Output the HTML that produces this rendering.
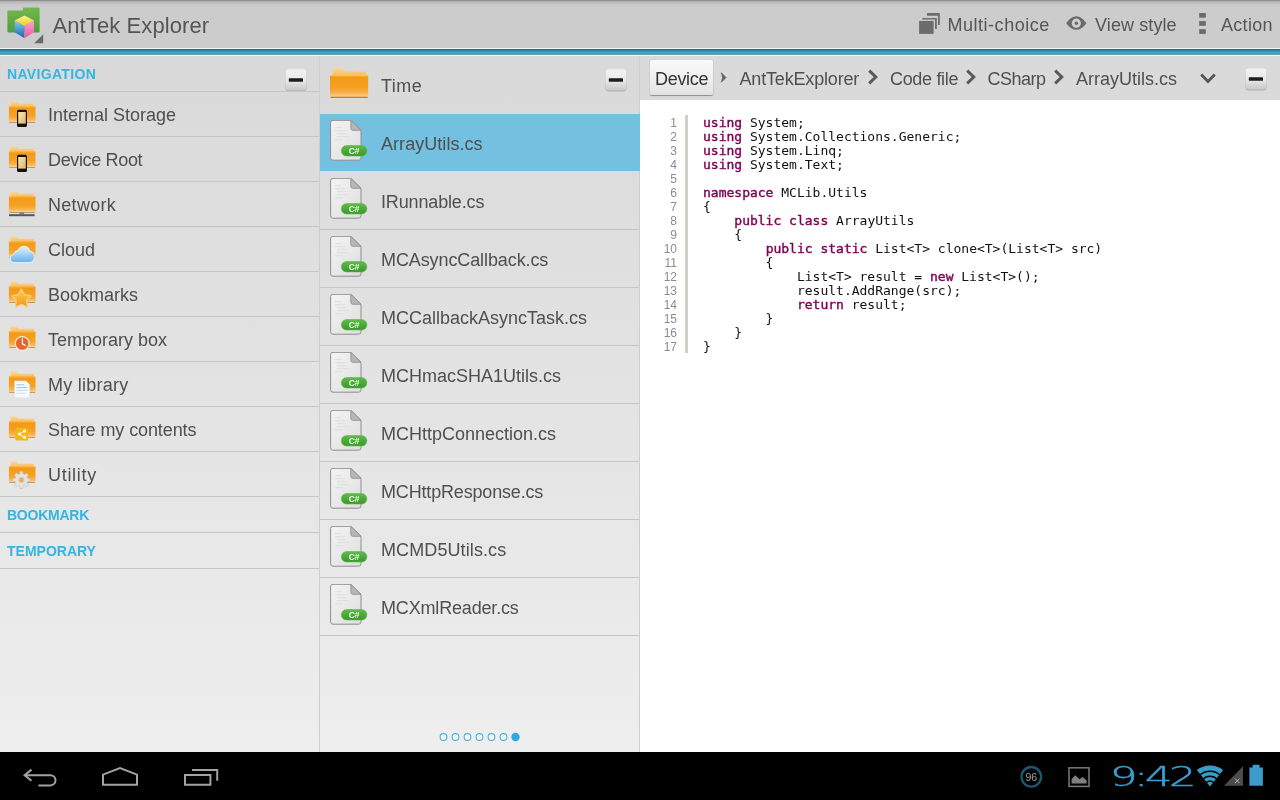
<!DOCTYPE html>
<html lang="en">
<head>
<meta charset="utf-8">
<title>AntTek Explorer</title>
<style>
html,body{margin:0;padding:0;}
body{width:1280px;height:800px;overflow:hidden;position:relative;background:#e6e6e6;font-family:"Liberation Sans",sans-serif;color:#4d4d4d;}
#bg{position:absolute;left:0;top:0;width:1280px;height:752px;background:linear-gradient(to bottom,#d9d9d9 56px,#eeeeee 752px);}
#app{position:absolute;left:0;top:0;width:1280px;height:752px;will-change:transform;}
#actionbar{position:absolute;left:0;top:0;width:1280px;height:48px;background:linear-gradient(to bottom,#8e8e8e 0,#8e8e8e 1px,#b2b2b2 1px,#b2b2b2 2px,#bebebe 2px,#c1c1c1 4px,#c8c8c8 4px,#c9c9c9 7px,#cccccc 7px,#cccccc 100%);}
#stripe{position:absolute;left:0;top:48px;width:1280px;height:8px;background:linear-gradient(to bottom,#eaf8fb 0px,#eaf8fb 1px,#35697f 1px,#35697f 2px,#37819f 2px,#37819f 3px,#3b93b5 3px,#3b93b5 4px,#44a0c3 4px,#44a0c3 5px,#4d9fc0 5px,#4d9fc0 6px,#5e9db7 6px,#5e9db7 7px,#eef9fc 7px,#eef9fc 8px);}
#title{position:absolute;left:52.5px;top:13px;font-size:22px;line-height:26px;color:#555;letter-spacing:0.1px;white-space:nowrap;}
.act{position:absolute;top:14px;font-size:18px;line-height:22px;color:#555;white-space:nowrap;}
.panel{position:absolute;top:56px;height:696px;}
#left{left:0;width:319px;}
#mid{left:320px;width:319px;}
#right{left:640px;width:640px;}
.vdiv{position:absolute;top:56px;width:1px;height:696px;background:#cecece;}
.sect{position:absolute;left:7px;font-size:14px;font-weight:bold;color:#33b5e5;line-height:16px;white-space:nowrap;}
.hdiv{position:absolute;left:0;width:319px;height:1px;background:#c6c6c6;}
.nav{position:absolute;left:48px;font-size:18px;line-height:22px;white-space:nowrap;color:#4f4f4f;}
.file{position:absolute;left:61px;font-size:18px;line-height:22px;white-space:nowrap;color:#4f4f4f;}
.badge{position:absolute;left:21.3px;width:25.6px;height:10.5px;line-height:10.8px;text-align:center;font-size:8.5px;font-weight:bold;color:#e6ffe2;letter-spacing:-0.1px;}
#sel{position:absolute;left:0;top:58px;width:320px;height:57px;background:#74c0e0;}
#crumbbar{position:absolute;left:0;top:0;width:640px;height:44px;background:#dadada;}
#devbtn{position:absolute;left:10px;top:4px;width:63px;height:35px;border-radius:2px;background:linear-gradient(to bottom,#fafafa,#ededed 60%,#e2e2e2);box-shadow:0 1px 1px rgba(0,0,0,0.35),0 0 1px rgba(0,0,0,0.25);}
#code{position:absolute;left:0;top:44px;width:640px;height:652px;background:#fff;}
.crumb{position:absolute;top:12px;font-size:18px;line-height:22px;white-space:nowrap;color:#4f4f4f;}
#navbg{position:absolute;left:0;top:752px;width:1280px;height:48px;background:#000;}
#navbar{position:absolute;left:0;top:752px;width:1280px;height:48px;will-change:transform;}
svg.ic{position:absolute;overflow:visible;}
pre{margin:0;}
#ln{position:absolute;left:0;top:16px;width:37px;text-align:right;font-family:"Liberation Sans",sans-serif;font-size:12px;line-height:14px;color:#8c8c8c;}
#gut{position:absolute;left:45px;top:15px;width:3px;height:238px;background:#d2cfc9;}
#src{position:absolute;left:63px;top:16px;font-family:"DejaVu Sans Mono","Liberation Mono",monospace;font-size:13px;line-height:14px;color:#111;}
#src b{color:#7f0055;font-weight:normal;-webkit-text-stroke:0.4px #7f0055;}
</style>
</head>
<body>
<svg width="0" height="0" style="position:absolute">
<defs>
<linearGradient id="gFold" x1="0" y1="0" x2="0" y2="1"><stop offset="0" stop-color="#f4a326"/><stop offset="0.12" stop-color="#f29b16"/><stop offset="0.6" stop-color="#f5a126"/><stop offset="0.82" stop-color="#f8b452"/><stop offset="0.96" stop-color="#fccd8a"/><stop offset="1" stop-color="#f3b762"/></linearGradient>
<linearGradient id="gFoldB" x1="0" y1="0" x2="0" y2="1"><stop offset="0" stop-color="#fcd692"/><stop offset="1" stop-color="#f7b44c"/></linearGradient>
<linearGradient id="gBtn" x1="0" y1="0" x2="0" y2="1"><stop offset="0" stop-color="#f3f3f3"/><stop offset="0.55" stop-color="#e8e8e8"/><stop offset="1" stop-color="#c9c9c9"/></linearGradient>
<linearGradient id="gPage" x1="0" y1="0" x2="1" y2="1"><stop offset="0" stop-color="#f4f4f4"/><stop offset="1" stop-color="#dedede"/></linearGradient>
<linearGradient id="gBadge" x1="0" y1="0" x2="0" y2="1"><stop offset="0" stop-color="#5fbb4a"/><stop offset="1" stop-color="#3c972d"/></linearGradient>
<linearGradient id="gScreen" x1="0" y1="0" x2="1" y2="1"><stop offset="0" stop-color="#f7e6bd"/><stop offset="1" stop-color="#e3b666"/></linearGradient>
<linearGradient id="gCloud" x1="0" y1="0" x2="0" y2="1"><stop offset="0" stop-color="#e6f5ff"/><stop offset="1" stop-color="#62b0ea"/></linearGradient>
<linearGradient id="gStar" x1="0" y1="0" x2="0" y2="1"><stop offset="0" stop-color="#fdd05c"/><stop offset="1" stop-color="#f39418"/></linearGradient>
<linearGradient id="gGreen" x1="0" y1="0" x2="0" y2="1"><stop offset="0" stop-color="#74b84c"/><stop offset="1" stop-color="#4f9c3c"/></linearGradient>
<linearGradient id="gCt" x1="0" y1="0" x2="0" y2="1"><stop offset="0" stop-color="#fff68a"/><stop offset="1" stop-color="#fcc22e"/></linearGradient>
<linearGradient id="gCl" x1="0" y1="0" x2="0" y2="1"><stop offset="0" stop-color="#7fd0f4"/><stop offset="1" stop-color="#1b62a8"/></linearGradient>
<linearGradient id="gCr" x1="0" y1="0" x2="0" y2="1"><stop offset="0" stop-color="#f7a6d6"/><stop offset="1" stop-color="#f0559a"/></linearGradient>
<symbol id="fold" viewBox="0 0 38.4 30" preserveAspectRatio="none">
  <path d="M2.6 1.7 Q2.6 0.1 4.2 0.1 H9.6 Q10.7 0.1 11.5 0.8 L14.6 3.5 H34.6 Q36 3.5 36 4.9 V11 H2.6 Z" fill="url(#gFoldB)"/>
  <rect x="0" y="6.9" width="38.4" height="22.3" rx="1.5" fill="url(#gFold)"/>
  <rect x="0.4" y="7.1" width="37.6" height="1.1" rx="0.5" fill="#fbc56c" opacity="0.8"/>
  <rect x="0.5" y="28.7" width="37.4" height="1.2" rx="0.6" fill="#a66f28" opacity="0.8"/>
</symbol>
<symbol id="minus" viewBox="0 0 24 24">
  <rect x="1.5" y="2.2" width="21" height="21.2" rx="3.4" fill="#9c9c9c" opacity="0.75"/>
  <rect x="1.1" y="0.9" width="21.8" height="22" rx="3.6" fill="#c4c4c4" opacity="0.45"/>
  <rect x="1.5" y="1.2" width="21" height="21" rx="3.2" fill="url(#gBtn)"/>
  <rect x="4.8" y="10.3" width="14.2" height="3.5" rx="0.5" fill="#1e1e1e"/>
</symbol>
<symbol id="cs" viewBox="0 0 38 42">
  <path d="M3 0.3 H20.8 L31 10.3 V37.8 Q31 40.2 28.6 40.2 H3 Q0.6 40.2 0.6 37.8 V2.7 Q0.6 0.3 3 0.3 Z" fill="url(#gPage)" stroke="#8f8f8f" stroke-width="1"/>
  <path d="M20.8 0.3 L31 10.3 H22.8 Q20.8 10.3 20.8 8.3 Z" fill="#b7b7b7" stroke="#8c8c8c" stroke-width="0.8"/>
  <g fill="#e0e0e0"><rect x="5" y="7" width="6" height="1.2"/><rect x="5" y="10" width="10" height="1.2"/><rect x="7" y="13" width="9" height="1.2"/><rect x="7" y="16" width="12" height="1.2"/><rect x="5" y="19" width="8" height="1.2"/></g>
  <rect x="11.3" y="25.5" width="25.6" height="10.5" rx="5.25" fill="url(#gBadge)" stroke="#5fb84c" stroke-width="0.6"/>
</symbol>
<symbol id="chev" viewBox="0 0 12 16">
  <path d="M2.2 1.6 L8.8 8 L2.2 14.4" fill="none" stroke="#5a5a5a" stroke-width="3"/>
</symbol>
</defs>
</svg>
<div id="bg"></div>
<div id="app">
  <div id="actionbar">
    
    <svg class="ic" style="left:0;top:0" width="48" height="48" viewBox="0 0 48 48">
      <path d="M7.4 11.6 Q7.4 10.6 8.4 10.6 H23 V8.6 Q23 7.6 24 7.6 H38.6 Q39.6 7.6 39.6 8.6 V31.6 Q39.6 32.6 38.6 32.6 H8.4 Q7.4 32.6 7.4 31.6 Z" fill="url(#gGreen)"/>
      <path d="M24.5 15.4 L34 20.6 L24.5 26.2 L14.6 20.6 Z" fill="url(#gCt)"/>
      <path d="M14.6 20.6 L24.5 26.2 V38.2 L14.6 32.2 Z" fill="url(#gCl)"/>
      <path d="M34 20.6 L24.5 26.2 V38.2 L34 32.2 Z" fill="url(#gCr)"/>
      <path d="M43.2 34.2 V43.2 H34.2 Z" fill="#6a6a6a"/>
    </svg>
    <svg class="ic" style="left:916px;top:10px" width="28" height="28" viewBox="916 10 28 28">
      <g fill="#6c6c6c">
        <rect x="919.1" y="20.9" width="14.5" height="13"/>
        <path d="M922.3 17.9 H936.8 V29 H935 V19.6 H922.3 Z"/>
        <path d="M927 13 H939.8 V24.9 H938 V15.8 H927 Z"/>
      </g>
    </svg>
    <svg class="ic" style="left:1064px;top:12px" width="26" height="24" viewBox="1064 12 26 24">
      <path d="M1066.2 23.2 Q1071 16.2 1076.3 16.2 Q1081.6 16.2 1086.4 23.2 Q1081.6 29.8 1076.3 29.8 Q1071 29.8 1066.2 23.2 Z" fill="#6a6a6a"/>
      <circle cx="1076.3" cy="23.2" r="4.6" fill="#cfcfcf"/>
      <circle cx="1076.3" cy="23.2" r="1.7" fill="#6a6a6a"/>
    </svg>
    <svg class="ic" style="left:1196px;top:10px" width="12" height="28" viewBox="1196 10 12 28">
      <g fill="#6a6a6a"><rect x="1199.2" y="13" width="6.6" height="4.7"/><rect x="1199.2" y="21.1" width="6.6" height="4.7"/><rect x="1199.2" y="29.2" width="6.6" height="4.7"/></g>
    </svg>
    <div id="title">AntTek Explorer</div>
    <div class="act" style="left:947.5px;letter-spacing:0.52px">Multi-choice</div>
    <div class="act" style="left:1095px;letter-spacing:0.1px">View style</div>
    <div class="act" style="left:1221px;letter-spacing:0.3px">Action</div>
  </div>
  <div id="stripe"></div>

  <div class="panel" id="left">
    <div class="sect" style="top:10px;letter-spacing:0.33px">NAVIGATION</div>
    <svg class="ic" style="left:283.5px;top:12.2px" width="24" height="24"><use href="#minus"/></svg>
    <div class="hdiv" style="top:35px"></div>
    <svg class="ic" style="left:4px;top:35px" width="40" height="45" viewBox="0 0 40 45"><use href="#fold" x="4.7" y="10.3" width="27" height="21.6"/><rect x="13" y="18.8" width="10" height="17.2" rx="1.6" fill="#171310"/><rect x="14.2" y="21" width="7.6" height="11.6" fill="url(#gScreen)"/></svg>
    <div class="nav" style="top:48px">Internal Storage</div>
    <div class="hdiv" style="top:80px"></div>
    <svg class="ic" style="left:4px;top:80px" width="40" height="45" viewBox="0 0 40 45"><use href="#fold" x="4.7" y="10.3" width="27" height="21.6"/><rect x="13" y="18.8" width="10" height="17.2" rx="1.6" fill="#171310"/><rect x="14.2" y="21" width="7.6" height="11.6" fill="url(#gScreen)"/></svg>
    <div class="nav" style="top:93px;letter-spacing:-0.35px">Device Root</div>
    <div class="hdiv" style="top:125px"></div>
    <svg class="ic" style="left:4px;top:125px" width="40" height="45" viewBox="0 0 40 45"><use href="#fold" x="4.7" y="10.3" width="27" height="21.6"/><rect x="5" y="33.2" width="25.6" height="2" fill="#4c5866"/><rect x="15.5" y="31.6" width="4.6" height="1.8" fill="#6f7b88"/></svg>
    <div class="nav" style="top:138px;letter-spacing:0.3px">Network</div>
    <div class="hdiv" style="top:170px"></div>
    <svg class="ic" style="left:4px;top:170px" width="40" height="45" viewBox="0 0 40 45"><use href="#fold" x="4.7" y="10.3" width="27" height="21.6"/><path d="M11 36.4 Q6.2 36.4 6.2 32.2 Q6.2 28.6 10 28.2 Q10.6 24.6 14.2 24.4 Q15.6 20.2 20 20.2 Q25 20.2 25.8 25.2 Q30.4 25.6 30.4 30.6 Q30.4 36.4 25 36.4 Z" fill="url(#gCloud)" stroke="#f2faff" stroke-width="0.8"/></svg>
    <div class="nav" style="top:183px">Cloud</div>
    <div class="hdiv" style="top:215px"></div>
    <svg class="ic" style="left:4px;top:215px" width="40" height="45" viewBox="0 0 40 45"><use href="#fold" x="4.7" y="10.3" width="27" height="21.6"/><path d="M17.40 17.70 L20.52 23.61 L27.10 24.75 L22.44 29.54 L23.40 36.15 L17.40 33.20 L11.40 36.15 L12.36 29.54 L7.70 24.75 L14.28 23.61 Z" fill="url(#gStar)" stroke="#fbd07a" stroke-width="1.2" stroke-linejoin="round"/></svg>
    <div class="nav" style="top:228px">Bookmarks</div>
    <div class="hdiv" style="top:260px"></div>
    <svg class="ic" style="left:4px;top:260px" width="40" height="45" viewBox="0 0 40 45"><use href="#fold" x="4.7" y="10.3" width="27" height="21.6"/><circle cx="18.2" cy="27.5" r="7.4" fill="#fbeee0"/><circle cx="18.2" cy="27.5" r="6.3" fill="#e8642c"/><path d="M18.4 22.6 V27.8 L21.6 29.6" fill="none" stroke="#fff" stroke-width="1.3"/></svg>
    <div class="nav" style="top:273px">Temporary box</div>
    <div class="hdiv" style="top:305px"></div>
    <svg class="ic" style="left:4px;top:305px" width="40" height="45" viewBox="0 0 40 45"><use href="#fold" x="4.7" y="10.3" width="27" height="21.6"/><path d="M10.6 20 H22 L25.6 23.4 V36.8 H10.6 Z" fill="#f7fafd" stroke="#d9e2ea" stroke-width="0.6"/><g fill="#a9c9e6"><rect x="12.4" y="23.2" width="8" height="1.1"/><rect x="12.4" y="26" width="11" height="1.1"/><rect x="12.4" y="28.8" width="11" height="1.1" opacity="0.6"/><rect x="12.4" y="31.6" width="9" height="1.1" opacity="0.5"/></g></svg>
    <div class="nav" style="top:318px;letter-spacing:0.25px">My library</div>
    <div class="hdiv" style="top:350px"></div>
    <svg class="ic" style="left:4px;top:350px" width="40" height="45" viewBox="0 0 40 45"><use href="#fold" x="4.7" y="10.3" width="27" height="21.6"/><rect x="11.2" y="21.9" width="13" height="12.6" rx="1.6" fill="#f6b616"/><g fill="#fff"><circle cx="20.6" cy="25" r="1.5"/><circle cx="20.6" cy="31.2" r="1.5"/><circle cx="15.2" cy="28.1" r="1.5"/></g><path d="M20.6 25 L15.2 28.1 L20.6 31.2" fill="none" stroke="#fff" stroke-width="1"/></svg>
    <div class="nav" style="top:363px;letter-spacing:-0.1px">Share my contents</div>
    <div class="hdiv" style="top:395px"></div>
    <svg class="ic" style="left:4px;top:395px" width="40" height="45" viewBox="0 0 40 45"><use href="#fold" x="4.7" y="10.3" width="27" height="21.6"/><path d="M25.87 27.52 L25.87 30.48 L23.60 30.59 L22.91 32.26 L24.44 33.95 L22.35 36.04 L20.66 34.51 L18.99 35.20 L18.88 37.47 L15.92 37.47 L15.81 35.20 L14.14 34.51 L12.45 36.04 L10.36 33.95 L11.89 32.26 L11.20 30.59 L8.93 30.48 L8.93 27.52 L11.20 27.41 L11.89 25.74 L10.36 24.05 L12.45 21.96 L14.14 23.49 L15.81 22.80 L15.92 20.53 L18.88 20.53 L18.99 22.80 L20.66 23.49 L22.35 21.96 L24.44 24.05 L22.91 25.74 L23.60 27.41 Z" fill="#e4e4e4" stroke="#bdbdbd" stroke-width="0.6" stroke-linejoin="round"/><circle cx="17.4" cy="29" r="3.3" fill="#d2d2d2"/><circle cx="17.4" cy="29" r="2.2" fill="#f5ab3c"/></svg>
    <div class="nav" style="top:408px;letter-spacing:0.7px">Utility</div>
    <div class="hdiv" style="top:440px"></div>
    <div class="sect" style="top:451px;letter-spacing:-0.25px">BOOKMARK</div>
    <div class="hdiv" style="top:476px"></div>
    <div class="sect" style="top:487px">TEMPORARY</div>
    <div class="hdiv" style="top:512px"></div>
  </div>
  <div class="vdiv" style="left:319px"></div>

  <div class="vdiv" style="left:639px"></div>
  <div class="panel" id="mid">
    <div id="sel"></div>
    <svg class="ic" style="left:9.8px;top:12.3px" width="38.4" height="30"><use href="#fold" width="38.4" height="30"/></svg>
    <svg class="ic" style="left:283.5px;top:12.4px" width="24" height="24"><use href="#minus"/></svg>
    <div class="file" style="top:19px;letter-spacing:0.5px">Time</div>
    <svg class="ic" style="left:10px;top:64.1px" width="38" height="42"><use href="#cs" width="38" height="42"/></svg><div class="badge" style="top:89.6px">C#</div>
    <div class="file" style="top:77px;letter-spacing:0.05px">ArrayUtils.cs</div>
    <svg class="ic" style="left:10px;top:122.1px" width="38" height="42"><use href="#cs" width="38" height="42"/></svg><div class="badge" style="top:147.6px">C#</div>
    <div class="file" style="top:135px;letter-spacing:-0.15px">IRunnable.cs</div>
    <div class="hdiv" style="top:173px"></div>
    <svg class="ic" style="left:10px;top:180.1px" width="38" height="42"><use href="#cs" width="38" height="42"/></svg><div class="badge" style="top:205.6px">C#</div>
    <div class="file" style="top:193px;letter-spacing:-0.1px">MCAsyncCallback.cs</div>
    <div class="hdiv" style="top:231px"></div>
    <svg class="ic" style="left:10px;top:238.1px" width="38" height="42"><use href="#cs" width="38" height="42"/></svg><div class="badge" style="top:263.6px">C#</div>
    <div class="file" style="top:251px">MCCallbackAsyncTask.cs</div>
    <div class="hdiv" style="top:289px"></div>
    <svg class="ic" style="left:10px;top:296.1px" width="38" height="42"><use href="#cs" width="38" height="42"/></svg><div class="badge" style="top:321.6px">C#</div>
    <div class="file" style="top:309px">MCHmacSHA1Utils.cs</div>
    <div class="hdiv" style="top:347px"></div>
    <svg class="ic" style="left:10px;top:354.1px" width="38" height="42"><use href="#cs" width="38" height="42"/></svg><div class="badge" style="top:379.6px">C#</div>
    <div class="file" style="top:367px">MCHttpConnection.cs</div>
    <div class="hdiv" style="top:405px"></div>
    <svg class="ic" style="left:10px;top:412.1px" width="38" height="42"><use href="#cs" width="38" height="42"/></svg><div class="badge" style="top:437.6px">C#</div>
    <div class="file" style="top:425px;letter-spacing:-0.17px">MCHttpResponse.cs</div>
    <div class="hdiv" style="top:463px"></div>
    <svg class="ic" style="left:10px;top:470.1px" width="38" height="42"><use href="#cs" width="38" height="42"/></svg><div class="badge" style="top:495.6px">C#</div>
    <div class="file" style="top:483px;letter-spacing:0.1px">MCMD5Utils.cs</div>
    <div class="hdiv" style="top:521px"></div>
    <svg class="ic" style="left:10px;top:528.1px" width="38" height="42"><use href="#cs" width="38" height="42"/></svg><div class="badge" style="top:553.6px">C#</div>
    <div class="file" style="top:541px;letter-spacing:-0.17px">MCXmlReader.cs</div>
    <div class="hdiv" style="top:579px"></div>
    <svg class="ic" style="left:116.6px;top:674px" width="90" height="14" viewBox="436 730 90 14"><circle cx="442.5" cy="737" r="3.4" fill="#f2f6f8" stroke="#4fb2dc" stroke-width="1.1"/><circle cx="454.5" cy="737" r="3.4" fill="#f2f6f8" stroke="#4fb2dc" stroke-width="1.1"/><circle cx="466.5" cy="737" r="3.4" fill="#f2f6f8" stroke="#4fb2dc" stroke-width="1.1"/><circle cx="478.5" cy="737" r="3.4" fill="#f2f6f8" stroke="#4fb2dc" stroke-width="1.1"/><circle cx="490.5" cy="737" r="3.4" fill="#f2f6f8" stroke="#4fb2dc" stroke-width="1.1"/><circle cx="502.5" cy="737" r="3.4" fill="#f2f6f8" stroke="#4fb2dc" stroke-width="1.1"/><circle cx="514.5" cy="737" r="4.2" fill="#2ca9e0"/></svg>
  </div>

  <div class="panel" id="right">
    <div id="crumbbar">
      <div id="devbtn"></div>
      <svg class="ic" style="left:80px;top:16px" width="8" height="12" viewBox="720 72 8 12"><path d="M721.4 72.8 L726 77.5 L721.4 82.2 L722.6 77.5 Z" fill="#636363" stroke="#636363" stroke-width="0.8" stroke-linejoin="round"/></svg>
      <svg class="ic" style="left:226.5px;top:13px" width="12" height="16"><use href="#chev"/></svg>
      <svg class="ic" style="left:324.5px;top:13px" width="12" height="16"><use href="#chev"/></svg>
      <svg class="ic" style="left:412.5px;top:13px" width="12" height="16"><use href="#chev"/></svg>
      <svg class="ic" style="left:559px;top:16px" width="18" height="13" viewBox="0 0 18 13"><path d="M2.2 2.4 L9 9.4 L15.8 2.4" fill="none" stroke="#555" stroke-width="2.8"/></svg>
      <svg class="ic" style="left:604.3px;top:10.6px" width="24" height="24"><use href="#minus"/></svg>
      <div class="crumb" style="left:15px;color:#333;letter-spacing:-0.3px">Device</div>
      <div class="crumb" style="left:99.5px;letter-spacing:-0.17px">AntTekExplorer</div>
      <div class="crumb" style="left:250px;letter-spacing:-0.33px">Code file</div>
      <div class="crumb" style="left:347.5px;letter-spacing:-0.5px">CSharp</div>
      <div class="crumb" style="left:436px">ArrayUtils.cs</div>
    </div>
    <div id="code">
<pre id="ln">1
2
3
4
5
6
7
8
9
10
11
12
13
14
15
16
17</pre>
      <div id="gut"></div>
<pre id="src"><b>using</b> System;
<b>using</b> System.Collections.Generic;
<b>using</b> System.Linq;
<b>using</b> System.Text;

<b>namespace</b> MCLib.Utils
{
    <b>public</b> <b>class</b> ArrayUtils
    {
        <b>public</b> <b>static</b> List&lt;T&gt; clone&lt;T&gt;(List&lt;T&gt; src)
        {
            List&lt;T&gt; result = <b>new</b> List&lt;T&gt;();
            result.AddRange(src);
            <b>return</b> result;
        }
    }
}</pre>
    </div>
  </div>
</div>
<div id="navbg"></div>
<div id="navbar">
  <svg class="ic" style="left:0;top:0" width="1280" height="48" viewBox="0 752 1280 48">
    <g fill="none" stroke="#a2a2a2" stroke-width="2">
      <path d="M31.5 769.6 L24.6 775.2 L31.5 780.8 M25 775.2 H50.4 A5.1 5.1 0 0 1 50.4 785.4 H38.4"/>
      <path d="M103 784.8 V774.6 L120 768 L137 774.6 V784.8 Z"/>
      <path d="M185 775 H210.4 V784.8 H185 Z M192 770 H217.2 V780.8"/>
    </g>
    <circle cx="1031.3" cy="776.8" r="9.8" fill="none" stroke="#1d566f" stroke-width="2.4"/>
    <text x="1031.3" y="780.6" text-anchor="middle" font-family="Liberation Sans, sans-serif" font-size="10.5" fill="#a0a0a0">96</text>
    <rect x="1069" y="767.8" width="20" height="18.6" fill="none" stroke="#7a7a7a" stroke-width="1.5"/>
    <path d="M1071.6 783.6 V779 L1075.4 775.2 L1079.4 779.2 L1082.6 777 L1086.6 780.4 V783.6 Z" fill="#808080"/>
    <text transform="translate(1109.8,785.8) scale(1.6,1)" font-family="DejaVu Sans Light, DejaVu Sans, sans-serif" font-weight="200" font-size="27.4" letter-spacing="-2.4" fill="#3a9fd0" stroke="#3a9fd0" stroke-width="0.45">9:42</text>
    <path d="M1210.00 786.60 L1196.80 770.01 A21.20 21.20 0 0 1 1223.20 770.01 Z" fill="#3b9ccc"/>
    <g fill="none" stroke="#000" stroke-width="1.5"><path d="M1199.41 775.35 A15.40 15.40 0 0 1 1220.59 775.35"/><path d="M1202.65 779.42 A10.20 10.20 0 0 1 1217.35 779.42"/><path d="M1205.64 783.17 A5.40 5.40 0 0 1 1214.36 783.17"/></g>
    <path d="M1224 785.8 H1243 V766.2 Z" fill="#4c4c4c"/>
    <path d="M1235 778.6 L1239.4 783 M1239.4 778.6 L1235 783" stroke="#bdbdbd" stroke-width="0.9" fill="none"/>
    <path d="M1249.4 767.4 H1252.6 V764.8 H1259.6 V767.4 H1262.9 V785.8 H1249.4 Z" fill="#3b9ccc"/>
  </svg>
</div>
</body>
</html>
